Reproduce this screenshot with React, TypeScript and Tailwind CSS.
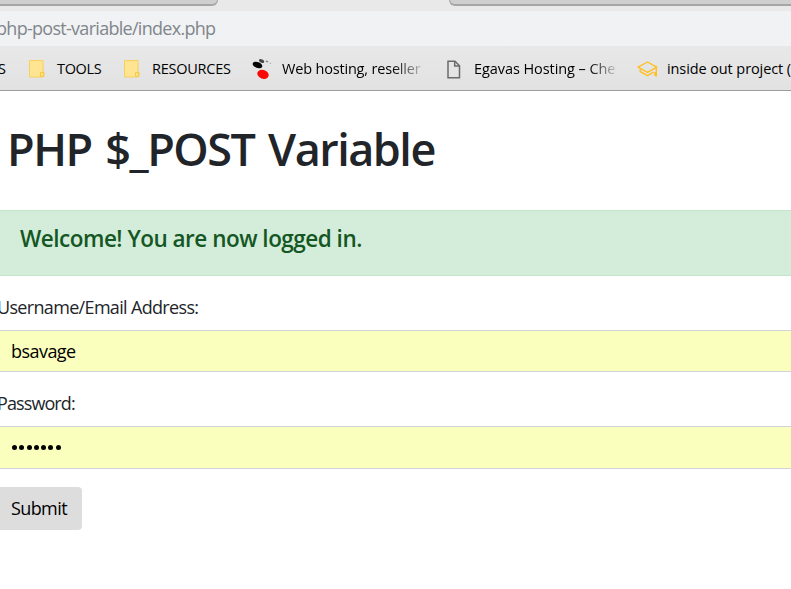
import type { ReactNode } from "react";

function FolderIcon() {
  return (
    <svg width="18" height="20" viewBox="0 0 18 20" className="shrink-0">
      <path d="M1.500 1.500h13.500v11.500h1v4.500h-1.500v0.500h-13z" fill="#ffe591" stroke="#f8d05c" />
      <path d="M12.500 13.500h3v4h-3z" fill="#ffe185" stroke="#f5c945" />
    </svg>
  );
}

function HostingIcon() {
  return (
    <svg width="20" height="22" viewBox="0 0 20 22" className="shrink-0">
      <ellipse cx="5.500" cy="7" rx="5" ry="3" transform="rotate(20 5.500 7)" fill="#050505" />
      <ellipse cx="9.600" cy="3" rx="2.900" ry="1.600" transform="rotate(28 9.600 3)" fill="#454545" />
      <ellipse cx="15" cy="3.400" rx="1.400" ry="0.800" transform="rotate(20 15 3.400)" fill="#858585" />
      <circle cx="18.500" cy="5.200" r="0.700" fill="#aaa" />
      <ellipse cx="11" cy="16.300" rx="5.800" ry="4.400" transform="rotate(20 11 16.300)" fill="#f90606" />
    </svg>
  );
}

function PageIcon() {
  return (
    <svg width="14" height="19" viewBox="0 0 14 19" className="shrink-0" fill="none" stroke="#6b6b6b" strokeWidth="1.500">
      <path d="M1 1.200h7l4.500 4.600v12h-11.500z" />
      <path d="M7.700 1.200v4.900h4.800" />
    </svg>
  );
}

function CapIcon() {
  return (
    <svg width="21" height="17" viewBox="0 0 21 17" className="shrink-0" fill="none" stroke="#ffbf22" strokeWidth="1.400" strokeLinejoin="round">
      <path d="M1 6.200l9.500-5.200 9.300 5.200-9.300 5.200z" />
      <path d="M3.200 8v2.600l7.300 4 6-3.400" />
      <path d="M19.300 6.700v8.800M18 11v4" />
    </svg>
  );
}

function Bookmark({ icon, children, className }: { icon: ReactNode; children: ReactNode; className: string }) {
  return (
    <div className={"flex shrink-0 items-center " + className}>
      {icon}
      <span className="whitespace-nowrap">{children}</span>
    </div>
  );
}

export default function App() {
  return (
    <div className="h-[589px] w-[791px] overflow-hidden bg-white font-['Open_Sans','Noto_Sans',sans-serif] text-[18px] text-[#212529]">
      <header>
        <div className="flex h-[11px] items-start justify-between bg-[#e9e9e9]">
          <div className="h-[6px] w-[218px] rounded-br-[7px] border-r border-b-2 border-[#a6a6a6] bg-[#cfcfcf]" />
          <div className="h-[6px] w-[342px] rounded-bl-[7px] border-b-2 border-l border-[#a6a6a6] bg-[#cfcfcf]" />
        </div>
        <div className="flex h-[35px] items-center bg-[#f1f2f4] text-[#80868b]">
          <span className="-ml-[4px] whitespace-nowrap tracking-[-0.71px]">php-post-variable/index.php</span>
        </div>
        <nav className="flex h-[45px] items-center overflow-hidden border-b border-[#9c9c9c] bg-gradient-to-b from-[#e8e8e8] to-[#e2e2e2] pt-[2px] text-[14.500px] text-black">
          <span className="-ml-[2px] w-[30px] shrink-0">S</span>
          <Bookmark icon={<FolderIcon />} className="w-[95px] gap-[11px] tracking-[-0.35px]">TOOLS</Bookmark>
          <Bookmark icon={<FolderIcon />} className="w-[129px] gap-[11px] tracking-[-0.25px]">RESOURCES</Bookmark>
          <Bookmark icon={<HostingIcon />} className="w-[195px] gap-[10px] tracking-[-0.18px]">
            <span className="bg-gradient-to-r from-black from-75% to-[#bcbcbc] bg-clip-text text-transparent">Web hosting, reseller</span>
          </Bookmark>
          <Bookmark icon={<PageIcon />} className="w-[190px] gap-[13px] tracking-[-0.07px]">
            <span className="bg-gradient-to-r from-black from-78% to-[#c4c4c4] bg-clip-text text-transparent">Egavas Hosting – Che</span>
          </Bookmark>
          <Bookmark icon={<CapIcon />} className="gap-[9px] tracking-[-0.1px]">inside out project (</Bookmark>
        </nav>
      </header>
      <main className="pt-[31px]">
        <h1 className="ml-[7px] text-[45px] leading-[54px] font-semibold whitespace-nowrap tracking-[-1.5px] [word-spacing:3.500px]">PHP $_POST Variable</h1>
        <div className="mt-[34px] h-[66px] border-y border-[#c3e6cb] bg-[#d4edda] pt-[14px] pl-[20px] text-[#155724]">
          <h4 className="text-[22.500px] leading-[27px] font-semibold whitespace-nowrap tracking-[-0.5px]">Welcome! You are now logged in.</h4>
        </div>
        <form onSubmit={(e) => e.preventDefault()}>
          <label htmlFor="user" className="mt-[18px] -ml-[3px] block leading-[27px] tracking-[-0.67px]">Username/Email Address:</label>
          <input id="user" defaultValue="bsavage" className="mt-[9px] block h-[42px] w-full border-y border-[#ced4da] bg-[#faffbd] pl-[11px] tracking-[-0.55px] text-black outline-none" />
          <label htmlFor="pass" className="mt-[18px] -ml-[3px] block leading-[27px] tracking-[-0.9px]">Password:</label>
          <div id="pass" className="mt-[9px] flex h-[43px] items-center gap-[2.300px] border-y border-[#ced4da] bg-[#faffbd] pl-[12px]">
            {Array.from({ length: 7 }, (_, i) => (
              <span key={i} className="size-[5px] rounded-full bg-black" />
            ))}
          </div>
          <button className="mt-[18px] flex h-[43px] w-[82px] items-center rounded-r-[4px] bg-[#dddddd] pl-[11px] tracking-[-0.6px] text-black">Submit</button>
        </form>
      </main>
    </div>
  );
}
